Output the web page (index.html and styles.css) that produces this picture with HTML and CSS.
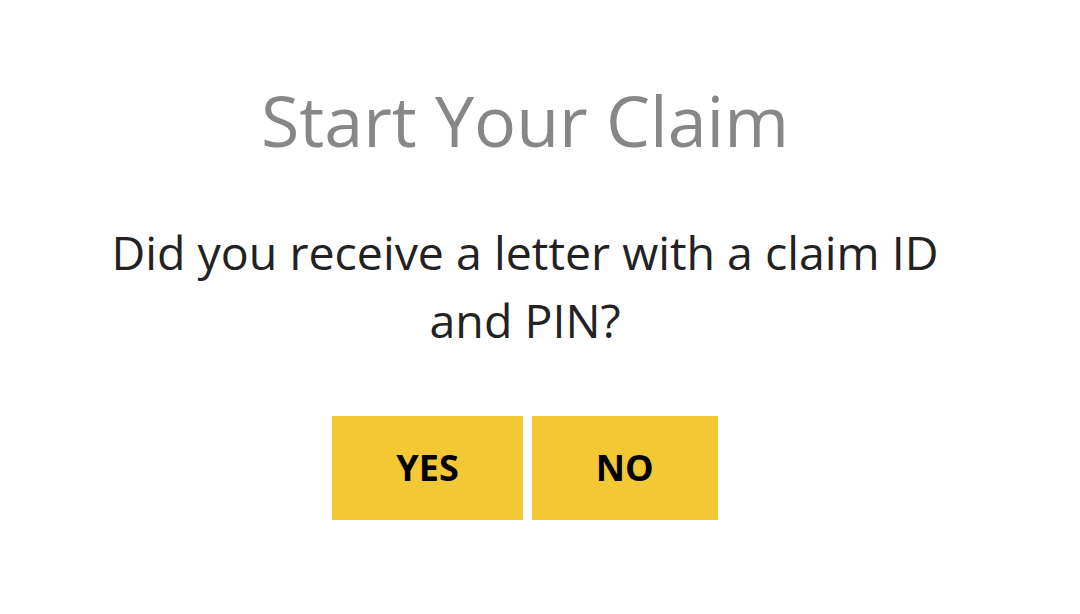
FILE: index.html
```html
<!DOCTYPE html>
<html lang="en">
<head>
    <meta charset="UTF-8">
    <meta name="viewport" content="width=device-width, initial-scale=1.0">
    <title>Start Your Claim</title>
    <link rel="stylesheet" href="styles.css">
</head>
<body>
    <div class="claim">
        <h1 class="claim-title">Start Your Claim</h1>
        <p class="claim-question">Did you receive a letter with a claim ID and PIN?</p>
        <div class="claim-btns">
            <a class="claim-btn" href="#">YES</a>
            <a class="claim-btn" href="#">NO</a>
        </div>
    </div>
</body>
</html>
```

FILE: styles.css
```css
*{ padding: 0; margin: 0; box-sizing: border-box; }

body{
    background: #fff;
    font-family: "Open Sans", "Liberation Sans", sans-serif;
}
.claim{
    width: 1050px;
    padding-top: 78px;
    display: flex;
    flex-direction: column;
    align-items: center;
}
.claim-title{
    font-size: 70px;
    font-weight: 400;
    line-height: 1.2;
    color: #878787;
}
.claim-question{
    max-width: 860px;
    margin-top: 56px;
    font-size: 46.5px;
    line-height: 68px;
    color: #222;
    text-align: center;
}
.claim-btns{
    display: flex;
    gap: 9px;
    margin-top: 62px;
}
.claim-btn{
    display: block;
    height: 104px;
    line-height: 104px;
    padding: 0 64px;
    background: #f4c834;
    color: #000;
    font-size: 36px;
    font-weight: 700;
    text-decoration: none;
}
```
